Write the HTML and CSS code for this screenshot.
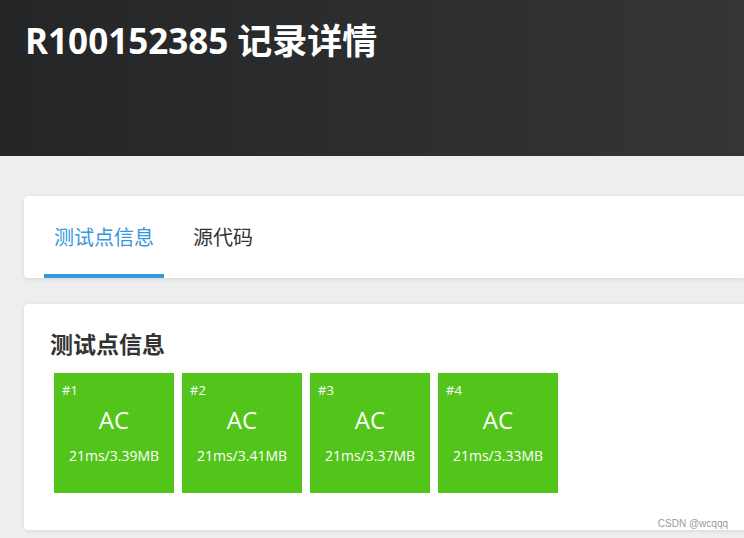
FILE: index.html
```html
<!DOCTYPE html>
<html lang="zh-CN">
<head>
  <meta charset="UTF-8">
  <meta name="viewport" content="width=device-width, initial-scale=1.0">
  <title>R100152385 记录详情</title>
  <link rel="stylesheet" href="styles.css">
</head>
<body>
  <div class="header">
    <h1>R100152385 记录详情</h1>
  </div>
  <div class="main">
    <div class="card tabs">
      <div class="tab active">测试点信息</div>
      <div class="tab">源代码</div>
    </div>
    <div class="card cases">
      <h2>测试点信息</h2>
      <div class="case-list">
        <div class="case">
          <span class="case-no">#1</span>
          <span class="case-status">AC</span>
          <span class="case-info">21ms/3.39MB</span>
        </div>
        <div class="case">
          <span class="case-no">#2</span>
          <span class="case-status">AC</span>
          <span class="case-info">21ms/3.41MB</span>
        </div>
        <div class="case">
          <span class="case-no">#3</span>
          <span class="case-status">AC</span>
          <span class="case-info">21ms/3.37MB</span>
        </div>
        <div class="case">
          <span class="case-no">#4</span>
          <span class="case-status">AC</span>
          <span class="case-info">21ms/3.33MB</span>
        </div>
      </div>
    </div>
  </div>
  <div class="watermark">CSDN @wcqqq</div>
</body>
</html>
```

FILE: styles.css
```css
body {
  margin: 0;
  padding: 0;
  background: #eeeeee;
  font-family: "Open Sans", "Noto Sans CJK SC", sans-serif;
  overflow: hidden;
  height: 100vh;
}
.header {
  height: 156px;
  background: linear-gradient(to right, #242527, #343537);
  padding: 18px 0 0 25px;
  box-sizing: border-box;
}
.header h1 {
  margin: 0;
  color: #ffffff;
  font-size: 35px;
  line-height: 46px;
  font-weight: 700;
}
.main {
  margin: 40px 0 0 24px;
}
.card {
  background: #ffffff;
  border-radius: 4px 0 0 4px;
  box-shadow: 0 1px 4px rgba(0, 0, 0, 0.1);
}
.tabs {
  display: flex;
  padding-left: 20px;
  height: 82px;
}
.tab {
  box-sizing: border-box;
  height: 82px;
  padding: 0 10px;
  font-size: 20px;
  line-height: 83px;
  color: #333333;
  border-bottom: 4px solid transparent;
  margin-right: 19px;
}
.tab.active {
  color: #3498db;
  border-bottom-color: #3498db;
}
.cases {
  margin-top: 26px;
  padding: 24px 26px 33px;
}
.cases h2 {
  margin: 0 0 9px;
  font-size: 23px;
  line-height: 32px;
  font-weight: 700;
  color: #333333;
}
.case-list {
  display: flex;
}
.case {
  width: 120px;
  height: 120px;
  margin: 4px;
  background: #52c41a;
  color: #ffffff;
  display: flex;
  flex-direction: column;
  align-items: center;
}
.case-no {
  align-self: flex-start;
  font-size: 13px;
  line-height: 16px;
  margin: 9px 0 0 8px;
}
.case-status {
  font-size: 24px;
  line-height: 30px;
  margin-top: 7px;
}
.case-info {
  font-size: 14px;
  line-height: 20px;
  margin-top: 11px;
}
.watermark {
  position: absolute;
  right: 16px;
  bottom: 9px;
  font-family: "Liberation Sans", sans-serif;
  font-size: 10px;
  color: #9a9a9a;
}
```
